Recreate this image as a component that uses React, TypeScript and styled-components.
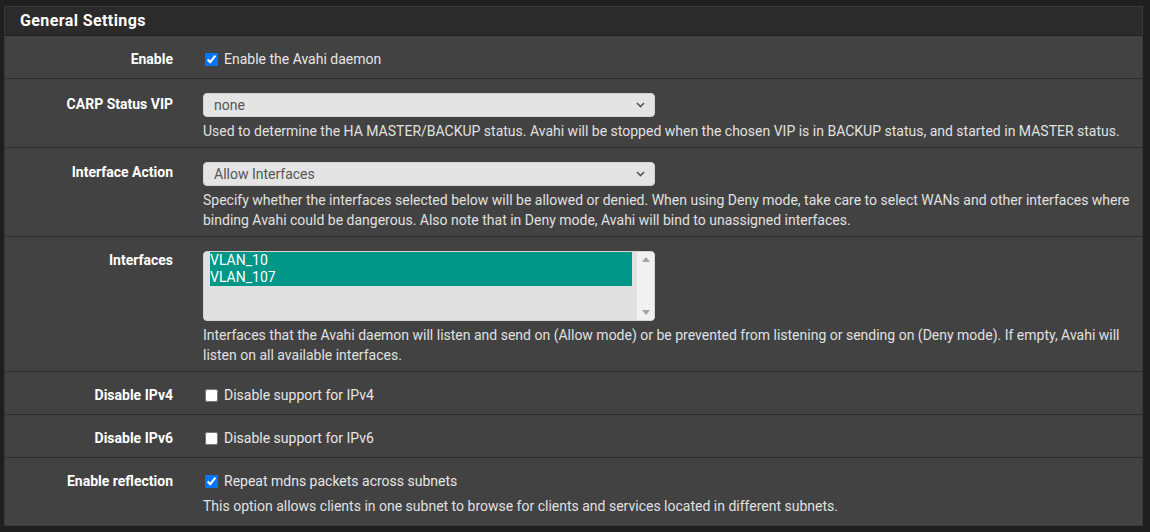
import React from "react";
import styled, { createGlobalStyle } from "styled-components";

const GlobalStyle = createGlobalStyle`
  html, body {
    margin: 0;
    padding: 0;
    background: #1f1f1f;
  }
  body {
    font-family: Roboto, "Noto Sans", "Liberation Sans", sans-serif;
    font-size: 14px;
    line-height: 20px;
    color: #e6e6e6;
  }
`;

const Page = styled.div`
  padding: 6px 7px 6px 4px;
`;

const Panel = styled.section`
  border: 1px solid #383838;
  background: #424242;
`;

const Heading = styled.h2`
  margin: 0;
  height: 28px;
  padding: 0 15px;
  display: flex;
  align-items: center;
  background: #2b2b2b;
  border-bottom: 1px solid #1f1f1f;
  color: #ffffff;
  font-size: 16px;
  font-weight: 700;
  letter-spacing: 0.4px;
`;

const Row = styled.div<{ $top?: number; $bottom?: number }>`
  display: grid;
  grid-template-columns: 183px 1fr;
  padding: ${(p) => p.$top ?? 13}px 0 ${(p) => p.$bottom ?? 9}px;
  border-bottom: 1px solid #2c2c2c;
  &:last-child {
    border-bottom: none;
  }
`;

const Label = styled.div<{ $offset?: number }>`
  padding-right: 15px;
  margin-top: ${(p) => p.$offset ?? 0}px;
  text-align: right;
  font-weight: 700;
  color: #ffffff;
`;

const Field = styled.div`
  padding: 0 12px 0 15px;
  min-width: 0;
`;

const CheckLine = styled.label`
  display: flex;
  align-items: center;
  height: 20px;
  color: #e6e6e6;
`;

const Check = styled.input.attrs({ type: "checkbox" })`
  width: 13px;
  height: 13px;
  margin: 0 6px 0 2px;
`;

const SelectWrap = styled.div`
  position: relative;
  width: 452px;
  height: 24px;
`;

const Select = styled.select`
  appearance: none;
  -webkit-appearance: none;
  width: 100%;
  height: 24px;
  padding: 0 24px 0 10px;
  border: 1px solid #d4d4d4;
  border-radius: 4px;
  background: #e4e4e4;
  color: #555555;
  font-family: inherit;
  font-size: 14px;
  outline: none;
`;

const Chevron = styled.svg`
  position: absolute;
  right: 10px;
  top: 9px;
  width: 9px;
  height: 6px;
  pointer-events: none;
`;

const Help = styled.div<{ $gap?: number }>`
  margin-top: ${(p) => p.$gap ?? 4}px;
  color: #e0e0e0;
`;

const ListBox = styled.div`
  width: 452px;
  height: 70px;
  display: flex;
  border: 1px solid #d4d4d4;
  border-radius: 4px;
  background: #e0e0e0;
  overflow: hidden;
  box-sizing: border-box;
`;

const Options = styled.ul`
  flex: 1;
  margin: 0;
  padding: 0 5px 0 6px;
  list-style: none;
`;

const Option = styled.li<{ $selected?: boolean }>`
  height: 17px;
  line-height: 17px;
  background: ${(p) => (p.$selected ? "#009688" : "transparent")};
  color: ${(p) => (p.$selected ? "#ffffff" : "#555555")};
`;

const ScrollTrack = styled.div`
  width: 17px;
  background: #f1f1f1;
  display: flex;
  flex-direction: column;
  justify-content: space-between;
  align-items: center;
  padding: 5px 0;
`;

const Arrow = styled.svg`
  width: 8px;
  height: 5px;
`;

function Dropdown({ value }: { value: string }) {
  return (
    <SelectWrap>
      <Select value={value} onChange={() => {}}>
        <option>{value}</option>
      </Select>
      <Chevron viewBox="0 0 9 6">
        <path d="M1 1l3.5 3.5L8 1" fill="none" stroke="#555" strokeWidth="1.6" />
      </Chevron>
    </SelectWrap>
  );
}

export default function App() {
  return (
    <>
      <GlobalStyle />
      <Page>
        <Panel>
          <Heading>General Settings</Heading>

          <Row $top={13} $bottom={9}>
            <Label>Enable</Label>
            <Field>
              <CheckLine>
                <Check defaultChecked />
                Enable the Avahi daemon
              </CheckLine>
            </Field>
          </Row>

          <Row $top={14} $bottom={6}>
            <Label $offset={1}>CARP Status VIP</Label>
            <Field>
              <Dropdown value="none" />
              <Help>
                Used to determine the HA MASTER/BACKUP status. Avahi will be stopped when the chosen VIP is in BACKUP
                status, and started in MASTER status.
              </Help>
            </Field>
          </Row>

          <Row $top={14} $bottom={6}>
            <Label>Interface Action</Label>
            <Field>
              <Dropdown value="Allow Interfaces" />
              <Help>
                Specify whether the interfaces selected below will be allowed or denied. When using Deny mode, take care
                to select WANs and other interfaces where binding Avahi could be dangerous. Also note that in Deny mode,
                Avahi will bind to unassigned interfaces.
              </Help>
            </Field>
          </Row>

          <Row $top={14} $bottom={6}>
            <Label $offset={-1}>Interfaces</Label>
            <Field>
              <ListBox>
                <Options>
                  <Option $selected>VLAN_10</Option>
                  <Option $selected>VLAN_107</Option>
                </Options>
                <ScrollTrack>
                  <Arrow viewBox="0 0 8 5">
                    <path d="M0 5L4 0L8 5Z" fill="#a3a3a3" />
                  </Arrow>
                  <Arrow viewBox="0 0 8 5">
                    <path d="M0 0L4 5L8 0Z" fill="#a3a3a3" />
                  </Arrow>
                </ScrollTrack>
              </ListBox>
              <Help $gap={4}>
                Interfaces that the Avahi daemon will listen and send on (Allow mode) or be prevented from listening or
                sending on (Deny mode). If empty, Avahi will listen on all available interfaces.
              </Help>
            </Field>
          </Row>

          <Row $top={13} $bottom={9}>
            <Label>Disable IPv4</Label>
            <Field>
              <CheckLine>
                <Check />
                Disable support for IPv4
              </CheckLine>
            </Field>
          </Row>

          <Row $top={13} $bottom={9}>
            <Label>Disable IPv6</Label>
            <Field>
              <CheckLine>
                <Check />
                Disable support for IPv6
              </CheckLine>
            </Field>
          </Row>

          <Row $top={13} $bottom={9}>
            <Label>Enable reflection</Label>
            <Field>
              <CheckLine>
                <Check defaultChecked />
                Repeat mdns packets across subnets
              </CheckLine>
              <Help $gap={5}>
                This option allows clients in one subnet to browse for clients and services located in different subnets.
              </Help>
            </Field>
          </Row>
        </Panel>
      </Page>
    </>
  );
}
